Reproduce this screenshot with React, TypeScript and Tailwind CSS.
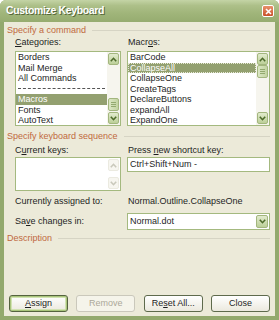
import React from "react";

function Chevron({ dir, color = "#4d6a2a" }: { dir: "up" | "down"; color?: string }) {
  return (
    <svg width="7" height="5" viewBox="0 0 7 5">
      <path
        d={dir === "up" ? "M0.8 4.2 L3.5 1.3 L6.2 4.2" : "M0.8 0.8 L3.5 3.7 L6.2 0.8"}
        fill="none"
        stroke={color}
        strokeWidth="1.6"
      />
    </svg>
  );
}

function ArrowBtn({ dir, disabled }: { dir: "up" | "down"; disabled?: boolean }) {
  if (disabled) {
    return (
      <div className="flex h-[12px] items-center justify-center rounded-[2px] border border-[#ebeae0] bg-[#f7f6f0]">
        <Chevron dir={dir} color="#c9c8bb" />
      </div>
    );
  }
  return (
    <div className="flex h-[12px] items-center justify-center rounded-[2px] border border-[#a3b67e] bg-gradient-to-b from-[#e2ebcd] to-[#bccf98]">
      <Chevron dir={dir} />
    </div>
  );
}

function Thumb() {
  return (
    <div className="flex h-[13px] flex-col items-center justify-center gap-[1px] rounded-[2px] border border-[#a3b67e] bg-gradient-to-r from-[#dbe6c4] to-[#c3d4a2]">
      <div className="h-px w-[5px] bg-[#93a96f]" />
      <div className="h-px w-[5px] bg-[#93a96f]" />
      <div className="h-px w-[5px] bg-[#93a96f]" />
    </div>
  );
}

function ScrollBar({ thumb }: { thumb: "top" | "bottom" | "none" }) {
  const disabled = thumb === "none";
  return (
    <div className="flex w-[13px] flex-col bg-[#f6f5ee] p-px">
      <ArrowBtn dir="up" disabled={disabled} />
      <div className="flex flex-1 flex-col">
        {thumb === "top" && <Thumb />}
        {thumb === "bottom" && (
          <>
            <div className="flex-1" />
            <Thumb />
            <div className="h-[1px]" />
          </>
        )}
      </div>
      <ArrowBtn dir="down" disabled={disabled} />
    </div>
  );
}

type Item = { text?: string; sel?: boolean; focus?: boolean; sep?: boolean };

function ListBox({ items, width, thumb }: { items: Item[]; width: string; thumb: "top" | "bottom" }) {
  return (
    <div className={`flex h-[75px] ${width} border border-[#a4b97f] bg-white`}>
      <div className="flex flex-1 flex-col overflow-hidden">
        {items.map((it, i) =>
          it.sep ? (
            <div key={i} className="flex h-[10.5px] shrink-0 items-center px-[2px]">
              <div className="w-full border-t border-dashed border-[#555]" />
            </div>
          ) : (
            <div
              key={i}
              className={`h-[10.5px] shrink-0 whitespace-nowrap pl-[2px] leading-[10.5px] ${
                it.sel ? "bg-[#93a070] text-white" : "text-[#1e1e1e]"
              } ${it.focus ? "outline outline-1 -outline-offset-1 outline-dotted outline-[#e8ead8]" : ""}`}
            >
              {it.text}
            </div>
          )
        )}
      </div>
      <ScrollBar thumb={thumb} />
    </div>
  );
}

function GroupHeader({ text, className = "" }: { text: string; className?: string }) {
  return (
    <div className={`flex h-[11px] items-center pl-[3px] pr-[5px] ${className}`}>
      <span className="whitespace-nowrap text-[#c0693e]">{text}</span>
      <div className="ml-[6px] h-px flex-1 bg-[#d6d4c4]" />
    </div>
  );
}

function Btn({ children, kind = "normal" }: { children: React.ReactNode; kind?: "normal" | "default" | "disabled" }) {
  const base = "flex h-[17px] w-[59px] items-center justify-center rounded-[3px] border";
  if (kind === "disabled")
    return <div className={`${base} border-[#cac8bb] bg-[#f5f4ea] text-[#aca899]`}>{children}</div>;
  if (kind === "default")
    return (
      <div
        className={`${base} border-[#55633f] bg-gradient-to-b from-white to-[#ebe9de] text-[#1e1e1e] shadow-[inset_0_0_0_1px_#a9c57c,inset_0_0_0_2px_#d2e3b3]`}
      >
        {children}
      </div>
    );
  return <div className={`${base} border-[#5e6a4c] bg-gradient-to-b from-white to-[#ebe9de] text-[#1e1e1e]`}>{children}</div>;
}

const U = ({ c }: { c: string }) => <span className="underline underline-offset-[1px]">{c}</span>;

export default function App() {
  return (
    <div className="h-[320px] w-[279px] bg-white [font-family:'Liberation_Sans',Arial,sans-serif]">
      <div className="flex h-full flex-col overflow-hidden rounded-t-[6px] bg-[#93a96d]">
        {/* Title bar */}
        <div className="flex h-[22px] shrink-0 items-center bg-[linear-gradient(to_bottom,#c4d4a6_0%,#adc089_25%,#a0b57a_60%,#96ac70_100%)] pl-[6px] pr-[5px]">
          <span className="text-[10.5px] font-bold tracking-[-0.35px] text-white [text-shadow:1px_1px_0_#56683a]">
            Customize Keyboard
          </span>
          <div className="ml-auto flex h-[12px] w-[12px] items-center justify-center rounded-[2px] border border-white bg-gradient-to-b from-[#e8906a] to-[#c9512a]">
            <svg width="7" height="7" viewBox="0 0 7 7">
              <path d="M1 1 L6 6 M6 1 L1 6" stroke="white" strokeWidth="1.6" />
            </svg>
          </div>
        </div>

        {/* Body */}
        <div className="mx-[4px] mb-[4px] flex flex-1 flex-col bg-[#ecead9] text-[9px] leading-[11px] text-[#1e1e1e]">
          <GroupHeader text="Specify a command" className="mt-[3px]" />

          <div className="mt-[1px] flex h-[11px] gap-[6px] pl-[11px] pr-[5px]">
            <div className="w-[106px]">
              <U c="C" />ategories:
            </div>
            <div className="flex-1 pl-px">
              Macr<U c="o" />s:
            </div>
          </div>

          <div className="mt-[3px] flex gap-[6px] pl-[11px] pr-[5px]">
            <ListBox
              width="w-[106px]"
              thumb="bottom"
              items={[
                { text: "Borders" },
                { text: "Mail Merge" },
                { text: "All Commands" },
                { sep: true },
                { text: "Macros", sel: true },
                { text: "Fonts" },
                { text: "AutoText" },
              ]}
            />
            <ListBox
              width="flex-1"
              thumb="top"
              items={[
                { text: "BarCode" },
                { text: "CollapseAll", sel: true, focus: true },
                { text: "CollapseOne" },
                { text: "CreateTags" },
                { text: "DeclareButtons" },
                { text: "expandAll" },
                { text: "ExpandOne" },
              ]}
            />
          </div>

          <GroupHeader text="Specify keyboard sequence" className="mt-[5px]" />

          <div className="mt-[3px] flex h-[11px] gap-[6px] pl-[11px] pr-[5px]">
            <div className="w-[106px]">
              C<U c="u" />rrent keys:
            </div>
            <div className="flex-1 pl-px">
              Press <U c="n" />ew shortcut key:
            </div>
          </div>

          <div className="mt-[1px] flex items-start gap-[6px] pl-[11px] pr-[5px]">
            <div className="flex h-[34px] w-[106px] border border-[#a4b97f] bg-white">
              <div className="flex-1" />
              <div className="flex w-[13px] flex-col bg-white p-px">
                <ArrowBtn dir="up" disabled />
                <div className="flex-1" />
                <ArrowBtn dir="down" disabled />
              </div>
            </div>
            <div className="flex h-[15px] flex-1 items-center border border-[#a4b97f] bg-white pl-[2px]">
              Ctrl+Shift+Num -
            </div>
          </div>

          <div className="mt-[5px] flex h-[11px] gap-[6px] pl-[11px] pr-[5px]">
            <div className="w-[106px]">Currently assigned to:</div>
            <div className="flex-1 pl-px">Normal.Outline.CollapseOne</div>
          </div>

          <div className="mt-[6px] flex items-center gap-[6px] pl-[11px] pr-[5px]">
            <div className="w-[106px]">
              Sa<U c="v" />e changes in:
            </div>
            <div className="flex h-[17px] flex-1 items-center border border-[#a4b97f] bg-white pl-[2px] pr-px">
              <span className="flex-1">Normal.dot</span>
              <div className="flex h-[13px] w-[12px] items-center justify-center rounded-[2px] border border-[#a3b67e] bg-gradient-to-b from-[#e2ebcd] to-[#bccf98]">
                <Chevron dir="down" />
              </div>
            </div>
          </div>

          <GroupHeader text="Description" className="mt-[3px]" />

          <div className="flex-1" />

          <div className="mb-[4px] flex justify-between px-[5px]">
            <Btn kind="default">
              <U c="A" />ssign
            </Btn>
            <Btn kind="disabled">Remove</Btn>
            <Btn>
              Re<U c="s" />et All...
            </Btn>
            <Btn>Close</Btn>
          </div>
        </div>
      </div>
    </div>
  );
}
